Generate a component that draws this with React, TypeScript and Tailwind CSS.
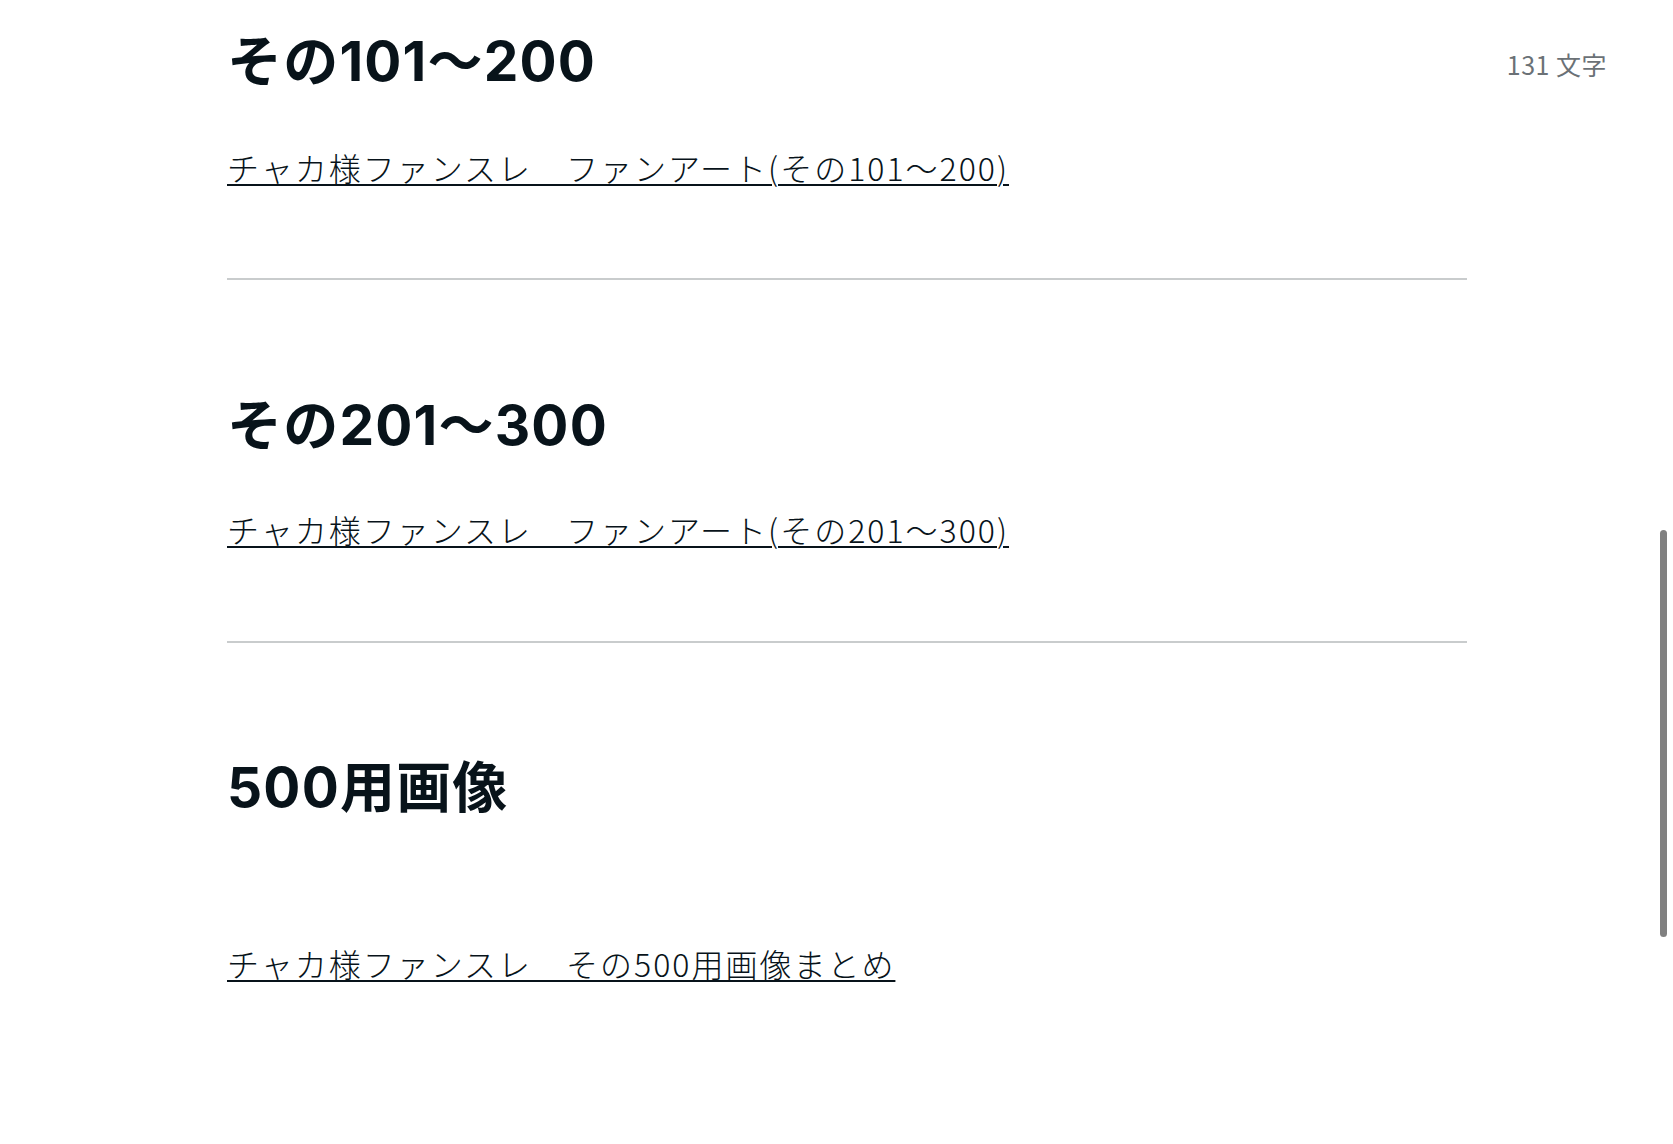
import React from "react";

const font = "font-['Noto_Sans_CJK_JP','Noto_Sans',sans-serif]";

function Heading({ children, className = "" }: { children: React.ReactNode; className?: string }) {
  return (
    <h2
      className={`h-[80px] font-['Inter','Noto_Sans_CJK_JP',sans-serif] text-[55px] leading-[80px] font-bold tracking-[1.2px] text-[#08131a] whitespace-nowrap ${className}`}
    >
      {children}
    </h2>
  );
}

function LinkLine({ children, className = "" }: { children: React.ReactNode; className?: string }) {
  return (
    <p className={`h-[56px] text-[32px] leading-[56px] font-light tracking-[2px] text-[#08131a] whitespace-nowrap ${className}`}>
      <a href="#" className="underline decoration-2 underline-offset-[3px] decoration-[#08131a]">
        {children}
      </a>
    </p>
  );
}

export default function App() {
  return (
    <div className={`relative w-full h-screen overflow-hidden bg-white ${font}`}>
      <div className="ml-[227px] w-[1240px] pt-[21px] flex flex-col">
        <Heading>その101～200</Heading>
        <LinkLine className="mt-[38px]">チャカ様ファンスレ　ファンアート(その101～200)</LinkLine>
        <div className="mt-[83px] h-[2px] bg-[#c9cccd]" />
        <Heading className="mt-[105px]">その201～300</Heading>
        <LinkLine className="mt-[36px]">チャカ様ファンスレ　ファンアート(その201～300)</LinkLine>
        <div className="mt-[84px] h-[2px] bg-[#c9cccd]" />
        <Heading className="mt-[104px]">500用画像</Heading>
        <LinkLine className="mt-[108px]">チャカ様ファンスレ　その500用画像まとめ</LinkLine>
      </div>

      <div className="absolute top-[49px] right-[66px] text-[25px] leading-[30px] tracking-[0.02em] text-[#6b7176] whitespace-nowrap">
        131 文字
      </div>

      <div className="absolute top-[530px] right-[6px] w-[7px] h-[407px] rounded-full bg-[#808080]" />
    </div>
  );
}
